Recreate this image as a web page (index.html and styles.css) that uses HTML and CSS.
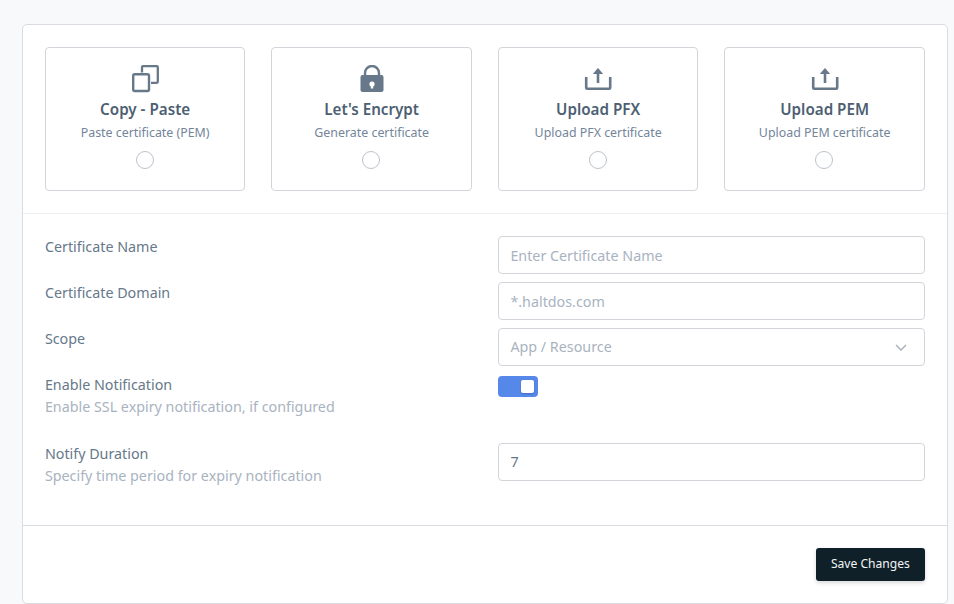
FILE: index.html
```html
<!DOCTYPE html>
<html lang="en">
<head>
<meta charset="utf-8">
<title>Certificate</title>
<link rel="stylesheet" href="styles.css">
</head>
<body>
<main class="panel">
  <section class="choices">
    <label class="choice">
      <svg class="icon" viewBox="0 0 28 28" width="28" height="28"><path d="M11 7.500V2.200a1 1 0 0 1 1-1h13.800a1 1 0 0 1 1 1v14.600a1 1 0 0 1-1 1H20" fill="none" stroke="#66788a" stroke-width="2.300"/><rect x="2.200" y="9.200" width="15.800" height="16.800" rx="1.500" fill="none" stroke="#66788a" stroke-width="2.400"/></svg>
      <span class="choice-title">Copy - Paste</span>
      <span class="choice-sub">Paste certificate (PEM)</span>
      <span class="radio"></span>
    </label>
    <label class="choice">
      <svg class="icon" viewBox="0 0 28 28" width="28" height="28"><path d="M7 12V8a7 7 0 0 1 14 0v4" fill="none" stroke="#66788a" stroke-width="2.400"/><path d="M2.500 12a2 2 0 0 1 2-2h19a2 2 0 0 1 2 2v13a2 2 0 0 1-2 2h-19a2 2 0 0 1-2-2z" fill="#66788a"/><circle cx="14" cy="19" r="2.600" fill="#fff"/><rect x="12.800" y="19" width="2.400" height="4.500" fill="#fff"/></svg>
      <span class="choice-title">Let's Encrypt</span>
      <span class="choice-sub">Generate certificate</span>
      <span class="radio"></span>
    </label>
    <label class="choice">
      <svg class="icon" viewBox="0 0 28 28" width="28" height="28"><path d="M2.200 12v10.800a1 1 0 0 0 1 1h22a1 1 0 0 0 1-1V12" fill="none" stroke="#66788a" stroke-width="2.600"/><path d="M14 8v10" stroke="#66788a" stroke-width="2.600"/><path d="M14 3l5.200 6H8.800z" fill="#66788a"/></svg>
      <span class="choice-title">Upload PFX</span>
      <span class="choice-sub">Upload PFX certificate</span>
      <span class="radio"></span>
    </label>
    <label class="choice">
      <svg class="icon" viewBox="0 0 28 28" width="28" height="28"><path d="M2.200 12v10.800a1 1 0 0 0 1 1h22a1 1 0 0 0 1-1V12" fill="none" stroke="#66788a" stroke-width="2.600"/><path d="M14 8v10" stroke="#66788a" stroke-width="2.600"/><path d="M14 3l5.200 6H8.800z" fill="#66788a"/></svg>
      <span class="choice-title">Upload PEM</span>
      <span class="choice-sub">Upload PEM certificate</span>
      <span class="radio"></span>
    </label>
  </section>
  <section class="form">
    <div class="row">
      <div class="label">Certificate Name</div>
      <div class="field"><input class="input" placeholder="Enter Certificate Name"></div>
    </div>
    <div class="row">
      <div class="label">Certificate Domain</div>
      <div class="field"><input class="input" placeholder="*.haltdos.com"></div>
    </div>
    <div class="row">
      <div class="label">Scope</div>
      <div class="field">
        <div class="select"><span class="select-text">App / Resource</span>
          <svg viewBox="0 0 12 7" width="12" height="7"><path d="M1 1l5 5 5-5" fill="none" stroke="#a3adb8" stroke-width="1.300"/></svg>
        </div>
      </div>
    </div>
    <div class="row row-toggle">
      <div>
        <div class="label">Enable Notification</div>
        <div class="hint">Enable SSL expiry notification, if configured</div>
      </div>
      <div class="field"><span class="toggle"><span class="knob"></span></span></div>
    </div>
    <div class="row row-last">
      <div>
        <div class="label">Notify Duration</div>
        <div class="hint">Specify time period for expiry notification</div>
      </div>
      <div class="field"><input class="input input-value" value="7"></div>
    </div>
  </section>
  <footer class="footer"><button class="save" type="button">Save Changes</button></footer>
</main>
</body>
</html>
```
FILE: styles.css
```css
* { box-sizing: border-box; }
html, body { margin: 0; height: 100%; }
body {
  background: #f8f9fb;
  font-family: "Noto Sans", "Liberation Sans", sans-serif;
  color: #66788a;
  padding: 24px 6.1px 0 21.9px;
  overflow: hidden;
}
.panel {
  background: #fff;
  border: 1px solid #d9dce1;
  border-radius: 5px;
  height: 580px;
  display: flex;
  flex-direction: column;
}
.choices {
  display: grid;
  grid-template-columns: repeat(4, 1fr);
  gap: 26px;
  padding: 22px;
  border-bottom: 1px solid #eceef1;
}
.choice {
  height: 144px;
  border: 1px solid #d2d5da;
  border-radius: 4px;
  display: flex;
  flex-direction: column;
  align-items: center;
  padding-top: 17px;
}
.icon { display: block; }
.choice-title {
  font-size: 15.2px;
  font-weight: 600;
  color: #4d5f73;
  line-height: 20px;
  margin-top: 6px;
}
.choice-sub {
  font-size: 12.4px;
  color: #73859a;
  line-height: 18px;
  margin-top: 5px;
}
.radio {
  width: 18px;
  height: 18px;
  border: 1px solid #bcc3cc;
  border-radius: 50%;
  margin: 9px 0.4px 0 0;
}
.form { padding: 22px 22px 0; flex: 1; }
.row {
  display: grid;
  grid-template-columns: 1fr 1fr;
  gap: 26px;
  margin-bottom: 8px;
}
.row-toggle { height: 69px; margin-bottom: 0; padding-top: 2px; }
.label { font-size: 14.3px; line-height: 21px; color: #66788a; }
.row-toggle .label { margin-top: -2px; }
.hint { font-size: 14.3px; line-height: 21px; color: #a9b3bf; margin-top: 1px; }
.input, .select {
  display: flex;
  align-items: center;
  justify-content: space-between;
  width: 100%;
  height: 38px;
  border: 1px solid #d2d5da;
  border-radius: 4px;
  background: #fff;
  padding: 0 12px 0 11.5px;
  font: 14.3px "Noto Sans", "Liberation Sans", sans-serif;
  color: #66788a;
  outline: none;
}
.input::placeholder { color: #a9b3bf; opacity: 1; }
.input-value { padding-bottom: 2px; }
.select { color: #a9b3bf; padding-right: 17px; }
.select-text { margin-bottom: 2px; }
.toggle {
  display: flex;
  justify-content: flex-end;
  align-items: center;
  width: 40px;
  height: 21px;
  background: #5688ea;
  border-radius: 4px;
  padding-right: 4px;
}
.knob {
  width: 13px;
  height: 13px;
  background: #fff;
  border-radius: 2px;
  box-shadow: 0 1px 2px rgba(0,0,0,.2);
}
.footer {
  border-top: 1px solid #d9dce1;
  height: 78px;
  display: flex;
  justify-content: flex-end;
  padding: 22px 22px 0;
}
.save {
  width: 109px;
  height: 33px;
  background: #0f2028;
  color: #f2f5f7;
  border: 0;
  border-radius: 3px;
  font: 12.1px "Noto Sans", "Liberation Sans", sans-serif;
  box-shadow: 0 2px 4px rgba(0,0,0,.15);
  padding: 0 0 2px;
}
```
